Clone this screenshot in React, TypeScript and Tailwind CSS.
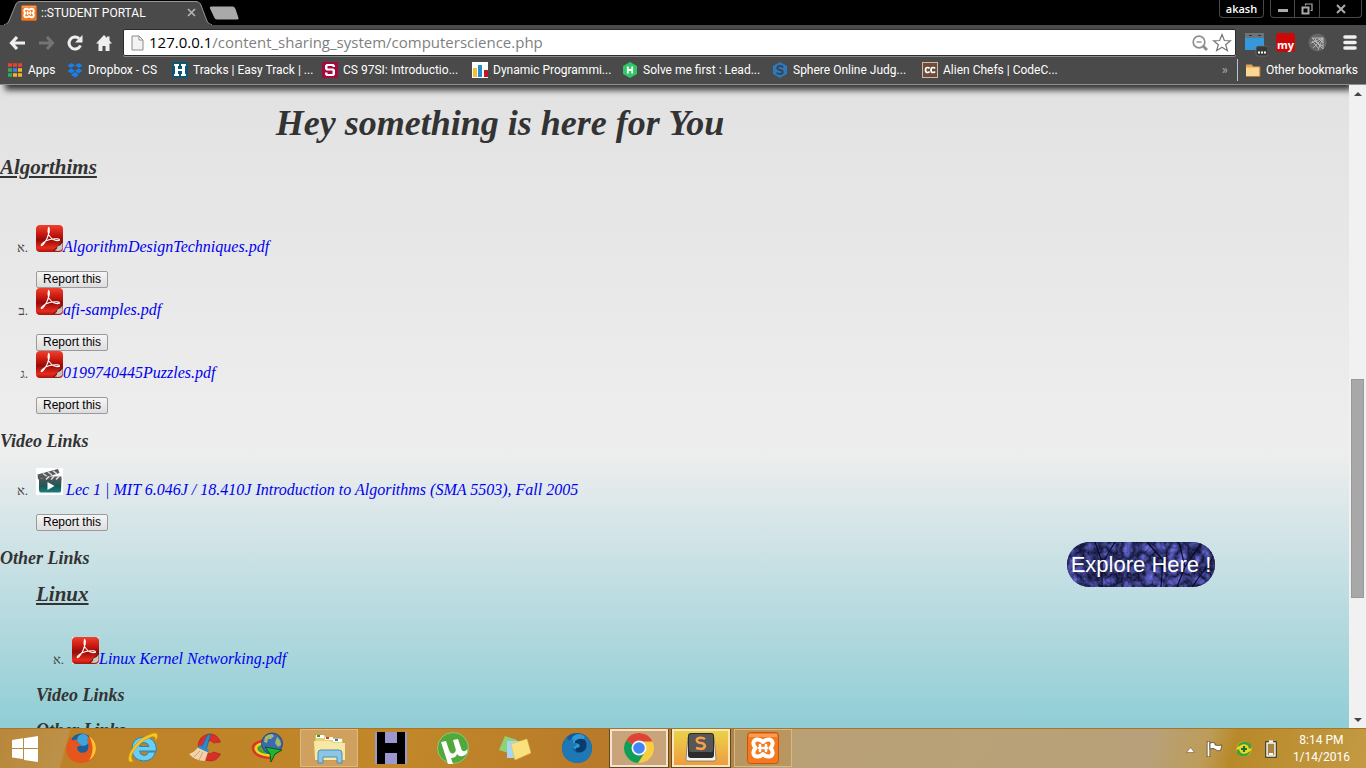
import type { ReactNode } from "react";

const ui = "font-['Open_Sans','Noto_Sans',sans-serif]";

function XamppIcon({ className }: { className: string }) {
  return (
    <svg viewBox="0 0 32 32" className={className} aria-hidden="true">
      <rect x="0.5" y="0.5" width="31" height="31" rx="3" fill="#f47a20" stroke="#c9540a" />
      <path d="M2 2h28v3H2z" fill="#fbb27c" opacity="0.6" />
      <path
        d="M16 10Q14 7.500 10.500 7.500C6 7.500 5 12.500 8.500 16C5 19.500 6 24.500 10.500 24.500Q14 24.500 16 22Q18 24.500 21.500 24.500C26 24.500 27 19.500 23.500 16C27 12.500 26 7.500 21.500 7.500Q18 7.500 16 10z"
        fill="none"
        stroke="#fff"
        strokeWidth="4"
        strokeLinejoin="round"
      />
      <path d="M12 16h8M13 13v6M19 13v6" fill="none" stroke="#fff" strokeWidth="2.600" strokeLinecap="round" />
    </svg>
  );
}

function PdfIcon() {
  return (
    <svg viewBox="0 0 27 27" className="h-[27px] w-[27px] shrink-0" aria-hidden="true">
      <defs>
        <linearGradient id="pdfRed" x1="0" y1="0" x2="0" y2="1">
          <stop offset="0" stopColor="#f2402c" />
          <stop offset="0.35" stopColor="#c4170f" />
          <stop offset="0.55" stopColor="#960a08" />
          <stop offset="0.85" stopColor="#e82c1c" />
          <stop offset="1" stopColor="#a5140f" />
        </linearGradient>
      </defs>
      <rect width="27" height="27" fill="#f6eeee" />
      <rect width="27" height="27" rx="4" fill="url(#pdfRed)" />
      <path d="M17 26L26.500 16v6L23 26z" fill="#5a1510" />
      <path d="M18.500 25.500Q21.500 24 21.500 21.500 25 20.500 26.500 17.500V23Q25.500 26 22 26z" fill="#c9c5bf" />
      <path
        d="M12.500 2.500c-1 4 .3 8.500 3.300 11.200c2.400 2 6.200 2.300 7.700 1.500c.7-1.300-3-1.800-7.200-1.200c-4.300.6-8 2.200-10.800 5.300c-.9 1.500.4 1.800 1.600.4c3-3.600 5-7.800 6-12.300c.4-2.600.2-4.700-.6-4.900z"
        fill="none"
        stroke="#fff"
        strokeWidth="1.1"
      />
    </svg>
  );
}

function VideoIcon() {
  return (
    <svg viewBox="0 0 27 27" className="mr-[3px] h-[27px] w-[27px] shrink-0" aria-hidden="true">
      <defs>
        <linearGradient id="clap" x1="0" y1="0" x2="0" y2="1">
          <stop offset="0" stopColor="#4b5558" />
          <stop offset="0.55" stopColor="#175a5a" />
          <stop offset="1" stopColor="#1b7f7a" />
        </linearGradient>
      </defs>
      <rect width="27" height="27" fill="#fff" />
      <path d="M3 11h22.500L25 23q0 1.500-2 1.500H5Q3 24.500 3 22z" fill="url(#clap)" />
      <path d="M1.500 6.500L22 1l1.500 4L6 10.500l-4 1z" fill="#55595c" />
      <path d="M7 5.500l4 3M12 4l4 3M17 2.800l4 3" stroke="#d8d8d8" strokeWidth="1.500" />
      <path d="M5 11.500h20.500v-3H8z" fill="#55595c" />
      <path d="M10 11.500l3-3M15 11.500l3-3M20 11.500l3-3" stroke="#e0e0e0" strokeWidth="1.500" />
      <path d="M11.500 14l7 4-7 4z" fill="#fff" />
    </svg>
  );
}

function FileItem({ marker, name, video, report = true }: { marker: string; name: string; video?: boolean; report?: boolean }) {
  return (
    <li className="flex items-baseline">
      <span className="w-9 shrink-0 pr-2 text-right text-[13px] leading-5 text-[#444]">{marker}</span>
      <div>
        <div className="flex h-8 items-baseline">
          {video ? <VideoIcon /> : <PdfIcon />}
          <a href="#file" className="text-[16px] leading-5 whitespace-nowrap text-[#0000ee] italic">
            {name}
          </a>
        </div>
        {report && (
          <button className="mt-[14px] block h-[17px] w-[72px] rounded-xs border border-[#9a9a9a] bg-linear-to-b from-[#f6f6f6] to-[#dddddd] font-['Liberation_Sans',sans-serif] text-[12px] leading-[15px] text-black">
            Report this
          </button>
        )}
      </div>
    </li>
  );
}

function SubHeading({ className, children }: { className: string; children: ReactNode }) {
  return <h3 className={`h-6 text-[18px] leading-[22px] font-bold italic ${className}`}>{children}</h3>;
}

const bookmarks: { label: string; icon: ReactNode }[] = [
  {
    label: "Dropbox - CS",
    icon: (
      <g fill="#1a7fe8">
        <path d="M4.500 1L8 3.500 4 6 .5 3.500zM11.500 1L8 3.500 12 6l3.500-2.500zM.5 9L4 6.200 8 8.800 4.500 11.500zM15.500 9L12 6.200 8 8.800l3.500 2.700zM8 9.800l3.500 2.700v.8L8 15.500l-3.500-2.200v-.8z" />
      </g>
    ),
  },
  {
    label: "Tracks | Easy Track | ...",
    icon: (
      <>
        <rect width="16" height="16" fill="#0f5673" />
        <path d="M2 2h5v2H6v3h4V4H9V2h5v2h-1v8h1v2H9v-2h1V9H6v3h1v2H2v-2h1V4H2z" fill="#fff" />
      </>
    ),
  },
  {
    label: "CS 97SI: Introductio...",
    icon: (
      <>
        <rect width="16" height="16" fill="#a6093d" />
        <path d="M13 5V3.500L11.500 2h-7L3 3.500V7l1.500 1.500h6V12h-5v-1.500H3v2L4.500 14h7l1.500-1.500V8l-1.500-1.500h-6V4h5v1z" fill="#fff" />
      </>
    ),
  },
  {
    label: "Dynamic Programmi...",
    icon: (
      <>
        <rect width="16" height="16" fill="#fff" />
        <rect x="1" y="6" width="4" height="9" fill="#f5bf3c" />
        <rect x="6" y="3" width="4" height="12" fill="#2290cf" />
        <rect x="12" y="8" width="4" height="7" fill="#c01822" />
      </>
    ),
  },
  {
    label: "Solve me first : Lead...",
    icon: (
      <>
        <path d="M8 0l7 4v8l-7 4-7-4V4z" fill="#2ec866" />
        <path d="M5.800 4.500v7M10.200 4.500v7M5.800 8h4.400" stroke="#fff" strokeWidth="1.800" />
      </>
    ),
  },
  {
    label: "Sphere Online Judg...",
    icon: (
      <>
        <path d="M8 0l7 4v8l-7 4-7-4V4z" fill="#2e78bd" />
        <path d="M11 5.500Q10.500 4 8 4T5.200 6Q5.200 7.500 8 8t2.800 2Q10.800 12 8 12t-3-1.700" fill="none" stroke="#35464f" strokeWidth="1.800" />
      </>
    ),
  },
  {
    label: "Alien Chefs | CodeC...",
    icon: (
      <>
        <rect x="0.5" y="0.5" width="15" height="15" fill="#6d4c3a" stroke="#cfb8a6" />
        <path d="M7.500 6.500Q7 5.500 5.500 5.500 3.500 5.500 3.500 8T5.500 10.500Q7 10.500 7.500 9.500M13 6.500Q12.500 5.500 11 5.500 9 5.500 9 8t2 2.500q1.500 0 2-1" fill="none" stroke="#fff" strokeWidth="1.700" />
      </>
    ),
  },
];

function TitleBar() {
  return (
    <div className="flex h-[25px] items-start bg-black">
      <div className="relative ml-1 flex h-[25px] w-[208px] shrink-0 items-center pr-3 pl-[17px]">
        <svg viewBox="0 0 208 25" preserveAspectRatio="none" className="absolute inset-0 h-full w-full" aria-hidden="true">
          <path d="M0 25Q4 24 5 21L12 4Q13 1.500 16 1.500H192Q195 1.500 196.500 4L203 21Q204 24 208 25z" fill="#4a4a4a" stroke="#969696" />
          <path d="M1 25H207" stroke="#4a4a4a" strokeWidth="2" />
        </svg>
        <XamppIcon className="relative h-4 w-4" />
        <span className="relative ml-1 flex-1 font-['Roboto',sans-serif] text-[12px] leading-4 whitespace-nowrap text-white">::STUDENT PORTAL</span>
        <button aria-label="Close tab" className="relative mr-[1px] flex h-4 w-4 items-center justify-center">
          <svg viewBox="0 0 9 9" className="h-[9px] w-[9px]">
            <path d="M1 1l7 7M8 1L1 8" stroke="#b5b5b5" strokeWidth="1.600" />
          </svg>
        </button>
      </div>
      <button aria-label="New tab" className="mt-[6px] -ml-[3px]">
        <svg viewBox="0 0 30 14" className="h-[14px] w-[30px]">
          <path d="M2.500.5H24Q25.500.5 26.500 3l3 9q.5 1.500-1.500 1.500H8Q6 13.500 5 11L.8 2Q.5.500 2.500.5z" fill="#a9a9a9" />
        </svg>
      </button>
      <div className="flex-1" />
      <button className="h-[18px] w-[45px] rounded-b-sm border border-t-0 border-[#484848] text-[11px] leading-4 font-semibold text-white">akash</button>
      <div className="mr-1 ml-[6px] flex h-[18px] rounded-b-sm border border-t-0 border-[#484848]">
        <button aria-label="Minimize" className="flex w-6 items-center justify-center border-r border-[#484848]">
          <svg viewBox="0 0 12 12" className="h-3 w-3"><path d="M1 7.500h10" stroke="#aaa" strokeWidth="3" /></svg>
        </button>
        <button aria-label="Restore" className="flex w-[25px] items-center justify-center border-r border-[#484848]">
          <svg viewBox="0 0 12 12" className="h-3 w-3" fill="none" stroke="#aaa">
            <path d="M4.500 2.500V1h6.500v6.500H9.500" strokeWidth="1.200" />
            <path d="M1.500 4.500h6v6h-6z" strokeWidth="2" />
          </svg>
        </button>
        <button aria-label="Close" className="flex w-[41px] items-center justify-center">
          <svg viewBox="0 0 10 10" className="h-[10px] w-[10px]"><path d="M1 1l8 8M9 1L1 9" stroke="#aaa" strokeWidth="2" /></svg>
        </button>
      </div>
    </div>
  );
}

function Toolbar() {
  return (
    <div className="flex h-8 items-center pt-[3px] pr-[9px] pl-2">
      <button aria-label="Back" className="w-[18px]">
        <svg viewBox="0 0 18 18" className="h-[18px] w-[18px]"><path d="M9 3L3.500 9 9 15M3.500 9H17" fill="none" stroke="#efefef" strokeWidth="3.200" /></svg>
      </button>
      <button aria-label="Forward" className="ml-3 w-[18px]">
        <svg viewBox="0 0 18 18" className="h-[18px] w-[18px]"><path d="M9 3l5.500 6L9 15M14.500 9H1" fill="none" stroke="#747474" strokeWidth="3" /></svg>
      </button>
      <button aria-label="Reload" className="ml-[10px] w-[18px]">
        <svg viewBox="0 0 18 18" className="h-[18px] w-[18px]">
          <path d="M14.500 11.500A6 6 0 1 1 13 4.500" fill="none" stroke="#efefef" strokeWidth="3" />
          <path d="M16.500 1v7.500H9z" fill="#efefef" />
        </svg>
      </button>
      <button aria-label="Home" className="ml-[11px] w-[18px]">
        <svg viewBox="0 0 18 18" className="h-[18px] w-[18px]"><path d="M9 1l3 3V2.500h2.500v4L17 9.500h-2.500V17h-4v-5h-3v5h-4V9.500H1z" fill="#efefef" /></svg>
      </button>
      <div className="ml-[10px] flex h-[27px] min-w-0 flex-1 items-center rounded-xs border border-[#2c2c2c] bg-white pr-[3px] pl-[7px] shadow-[0_1px_0_#8a8a8a]">
        <svg viewBox="0 0 13 16" className="h-4 w-[13px]"><path d="M1 1h7l4 4v10H1zM8 1v4h4" fill="#f3f3f3" stroke="#8c8c8c" /></svg>
        <p className="ml-[5px] min-w-0 flex-1 truncate pb-[2px] text-[15px] leading-[22px] text-[#7f7f7f]">
          <span className="text-black">127.0.0.1</span>/content_sharing_system/computerscience.php
        </p>
        <button aria-label="Zoom" className="mr-[3px]">
          <svg viewBox="0 0 18 18" className="h-[18px] w-[18px]" fill="none" stroke="#8e8e8e">
            <circle cx="8" cy="8" r="5.800" strokeWidth="1.700" /><path d="M5.500 8h5" strokeWidth="1.400" /><path d="M12 12l4 4" strokeWidth="2.800" />
          </svg>
        </button>
        <button aria-label="Bookmark this page">
          <svg viewBox="0 0 20 20" className="h-5 w-5"><path d="M10 1.500l2.400 6 6.100.3-4.800 3.900 1.700 6L10 14.300 4.600 17.700l1.700-6L1.500 7.800l6.100-.3z" fill="#fff" stroke="#757575" strokeWidth="1.200" /></svg>
        </button>
      </div>
      <button aria-label="Calendar extension" className="mt-1 ml-2">
        <svg viewBox="0 0 24 24" className="h-6 w-6">
          <rect x="1" y="0" width="19" height="5" fill="#69757b" /><path d="M5 2.500h3M14 2.500h3" stroke="#333" />
          <rect x="1" y="5" width="19" height="12" fill="#3498db" />
          <rect x="12" y="13" width="12" height="10" rx="2" fill="#383838" stroke="#777" strokeWidth="0.600" />
          <path d="M14 19.500h2m1 0h2m1 0h2" stroke="#fff" strokeWidth="2" />
        </svg>
      </button>
      <button aria-label="My extension" className="ml-2 flex h-[19px] w-[19px] items-center justify-center rounded-xs bg-[#cc0909] pt-1 text-[11px] leading-3 font-bold text-white">my</button>
      <button aria-label="Web extension" className="ml-[13px]">
        <svg viewBox="0 0 19 19" className="h-[19px] w-[19px]" fill="none" stroke="#bdbdbd">
          <circle cx="9.500" cy="9.500" r="9" fill="#666" stroke="none" />
          <path d="M4 5h11v11M4 5l11 11M15 5L5 15M15 5L3 10M15 5L10 17M7 5l1 3 4 4 3 1M11 5l1 2 1 1 2 1M4 8l3 3 3 4" strokeWidth="0.900" />
        </svg>
      </button>
      <button aria-label="Menu" className="ml-4">
        <svg viewBox="0 0 14 15" className="h-[15px] w-[14px]"><path d="M2 2h10M2 7.500h10M2 13h10" stroke="#f0f0f0" strokeWidth="3.600" strokeLinecap="round" /></svg>
      </button>
    </div>
  );
}

function BookmarkBar() {
  return (
    <div className="flex h-[28px] items-center border-b border-[#8f8f8f] pr-2 pb-px pl-2 font-['Roboto',sans-serif] text-[12px] leading-4 text-white">
      <a href="#apps" className="flex w-[59px] shrink-0 items-center gap-[6px]">
        <svg viewBox="0 0 14 14" className="h-[14px] w-[14px]">
          <path d="M0 2h4M5 2h4M10 2h4" stroke="#ee4136" strokeWidth="3.500" />
          <path d="M0 7h4" stroke="#2fae63" strokeWidth="3.500" /><path d="M5 7h4" stroke="#3c82f0" strokeWidth="3.500" /><path d="M10 7h4M5 12h4M10 12h4" stroke="#f6b81c" strokeWidth="3.500" />
          <path d="M0 12h4" stroke="#2fae63" strokeWidth="3.500" />
        </svg>
        Apps
      </a>
      <nav className="flex min-w-0 flex-1 overflow-hidden">
        {bookmarks.map((b, i) => (
          <a key={b.label} href="#bookmark" className={`flex shrink-0 items-center gap-[5px] whitespace-nowrap ${i === 0 ? "w-[105px]" : "w-[150px]"}`}>
            <svg viewBox="0 0 16 16" className="h-4 w-4 shrink-0" aria-hidden="true">{b.icon}</svg>
            {b.label}
          </a>
        ))}
      </nav>
      <button aria-label="More bookmarks" className="mr-[9px] text-[13px] text-[#aaa]">»</button>
      <div className="mr-[7px] h-[22px] w-px bg-[#b9c4d0]" />
      <a href="#other" className="flex items-center gap-[5px] whitespace-nowrap">
        <svg viewBox="0 0 16 16" className="h-4 w-4">
          <path d="M1 2.500h6l1 2h7v10H1z" fill="#e0a654" /><path d="M1 5.500h13.500v8.500H1z" fill="#fbd796" /><path d="M15 5v9.500H2" fill="none" stroke="#b17a33" />
        </svg>
        Other bookmarks
      </a>
    </div>
  );
}

const taskIcons: { label: string; box?: string; icon: ReactNode }[] = [
  {
    label: "Firefox",
    icon: (
      <>
        <circle cx="16.500" cy="14" r="12.500" fill="#1a5f9e" />
        <circle cx="18" cy="8" r="6" fill="#3ea4dc" />
        <path d="M3 10Q4 6 6 4.500 6 7 8 8.500 10.500 7 13 7.500 11.500 9 12 11 14.500 11 16 12 15 14.500 12 15 12 19 15.500 20.500 20 21.500 22.500 18.500 24.500 13 22 8L24 4Q31 9 31 17 30 30.500 16 31 2 30 1 17 1 13 3 10z" fill="#e4561b" />
        <path d="M24 4Q31 9 31 17 30 25 24 28.500 29 20 27 12 26 7 24 4z" fill="#fbc42c" />
      </>
    ),
  },
  {
    label: "Internet Explorer",
    icon: (
      <>
        <path d="M28.500 20Q26 29 16.500 29 5 28 5 17T16.500 5Q29.500 5 29.500 19H12.500Q13 23 17 23.500 20.500 23.500 21.500 20zM12.500 14.500H22Q21 10.500 17 10.500T12.500 14.500z" fill="#6ccdf5" stroke="#1f88bd" />
        <path d="M7 29Q1 32 1.500 26 2 20 9 12T24 2Q31-1 30.500 5 30 7 28.500 9 29 3 24 5 17 7 10 15T5 27Q5 29 7 29z" fill="#f9c820" stroke="#d49406" strokeWidth="0.600" />
      </>
    ),
  },
  {
    label: "CCleaner",
    icon: (
      <>
        <path d="M31.500 10Q28 1 19.500 2 9 4 9 16q1 13 13 13 6 0 9.500-7l-7-2q-3 3-6 1-3-6 0-11 3-3 6 1z" fill="#d83028" stroke="#a81d1c" strokeWidth="0.600" />
        <path d="M19 2l2.500 1L17 18l-5-2z" fill="#2b8acb" stroke="#1a5c93" strokeWidth="0.600" />
        <path d="M9 15l10 5-3 9Q6 29 0 22q6-2 9-7z" fill="#f2d2aa" />
        <path d="M11 19l-6 6m9-5l-4 8" stroke="#d0a26f" />
        <path d="M9.500 14.500l10 4.500" stroke="#2b8acb" strokeWidth="3" />
      </>
    ),
  },
  {
    label: "Internet Download Manager",
    icon: (
      <>
        <path d="M12 9Q1 11 2 17q2 8 17 9" fill="none" stroke="#df3328" strokeWidth="2.500" />
        <path d="M12 11.500Q4 13 5 17.500q2 5 14 6" fill="none" stroke="#f3d321" strokeWidth="2.500" />
        <path d="M12 14Q7 15 8 17.500q2 3 11 3.500" fill="none" stroke="#2bae3b" strokeWidth="2.500" />
        <circle cx="21" cy="11.500" r="10.500" fill="#3c69b4" stroke="#27477f" />
        <path d="M14 5q3-3 7-3l2 2-3 3-3 0-1 4-3-1zM26 5q4 3 4 8l-3 2-3-4z" fill="#a3b865" />
        <path d="M14 15l17 3-7 4-4 8-1-8z" fill="#1fb532" stroke="#075c13" />
      </>
    ),
  },
  {
    label: "File Explorer",
    box: "border border-[#d9b98a] bg-[#cfa05e]",
    icon: (
      <>
        <path d="M2 3h10l2 3h16v22H2z" fill="#e9cf76" stroke="#b99a3e" strokeWidth="0.600" />
        <path d="M3 3h8v3H3zM12 5h8v3h-8zM20 7h9v3h-9z" fill="#fff" />
        <path d="M4 3h3v2H4z" fill="#239c3f" /><path d="M13 5h3v2h-3z" fill="#cc3b25" /><path d="M22 7h3v2h-3z" fill="#2878d4" />
        <path d="M1 9h16l3 2h12v17H2z" fill="#f8e8a6" />
        <path d="M5 31V21q0-3 3-3h18q3 0 3 3v10h-5v-6H10v6z" fill="#8cc6e7" stroke="#4b8db8" />
      </>
    ),
  },
  {
    label: "H",
    icon: (
      <>
        <rect width="32" height="32" fill="#9a98ce" /><path d="M2 0h8v11h12V0h8v32h-8V21H10v11H2z" fill="#000" />
      </>
    ),
  },
  {
    label: "uTorrent",
    icon: (
      <>
        <circle cx="16" cy="16" r="15.500" fill="#52a83a" stroke="#90c777" />
        <path d="M4 10l5-1 3 9q2 5 5 3 3-2 1-6l-2-7 5-1 3 9q1 4 4 3 3-1 2-4 2 7-4 9-4 1-6-2-1 4-6 4l2 6h-5z" fill="#fff" />
      </>
    ),
  },
  {
    label: "Sticky Notes",
    icon: (
      <>
        <path d="M6 4l12 4-5 14L0 18z" fill="#8ed277" /><path d="M8 9l14 0v17H8z" fill="#a6d5f7" /><path d="M12 12l16-5 4 14-16 7z" fill="#f9e27d" stroke="#e0bd45" strokeWidth="0.500" />
      </>
    ),
  },
  {
    label: "Firefox Developer",
    icon: (
      <>
        <circle cx="16" cy="16" r="15" fill="#145a96" />
        <circle cx="18" cy="10" r="8" fill="#2f9bd6" />
        <path d="M3 10Q4 6 6 4.500 6 7 8 8.500 10.500 7 13 7.500 11.500 9 12 11 14.500 11 16 12 15 14.500 12 15 12 19 15.500 20.500 20 21.500 22.500 18.500 24.500 13 22 8L24 4Q31 9 31 17 30 30.500 16 31 2 30 1 17 1 13 3 10z" fill="#1f78b6" />
        <path d="M14 9q5-4 10-1 3 5 0 10-3 3-7 2-3-1-2-4 3 0 4-2-1-3-5-3z" fill="#0b3a6b" />
      </>
    ),
  },
  {
    label: "Chrome",
    box: "border-2 border-[#f1e3d0] bg-[#c9a47a] outline outline-[#64491f]",
    icon: (
      <>
        <circle cx="16" cy="16" r="15" fill="#f9cd42" />
        <path d="M16 16L3 8.500A15 15 0 0 1 29.500 9.500H16z" fill="#db4437" />
        <path d="M16 16L3 8.500A15 15 0 0 0 15 31l7-11z" fill="#0f9d58" />
        <circle cx="16" cy="16" r="7.500" fill="#f5f5f5" /><circle cx="16" cy="16" r="5.800" fill="#4285f4" />
      </>
    ),
  },
  {
    label: "Sublime Text",
    box: "border-2 border-[#f7e7ba] bg-linear-to-b from-[#e9d247] to-[#ee9d42] outline outline-[#64491f]",
    icon: (
      <>
        <path d="M3 5h26l2 22q0 2-2 2H3q-2 0-2-2z" fill="#f4f2ed" stroke="#666" strokeWidth="0.700" />
        <rect x="3" y="1" width="26" height="25" rx="3" fill="#2c2c2c" /><rect x="4" y="2" width="24" height="18" rx="2" fill="#575757" />
        <path d="M20 7q-3-2-6-1t-2 3q1 2 4 2t4 3q-1 3-4 3l-5-1" fill="none" stroke="#f6a04a" strokeWidth="2.500" />
      </>
    ),
  },
];

function Taskbar() {
  return (
    <footer className="flex h-10 shrink-0 items-stretch overflow-hidden border-t border-[#a97424] bg-[linear-gradient(105deg,#b8873b_0,#bd9148_5%,#bd8228_5.200%,#c18729_30%,#b5752a_50%,#b18547_54%,#b9a075_57%,#b8a17a_84%,#bd9c57_88%,#b88928_90%,#c39a43_100%)]">
      <button aria-label="Start" className="flex w-[50px] shrink-0 items-center justify-center">
        <svg viewBox="0 0 28 26" className="h-[26px] w-7" fill="#fff">
          <path d="M1 4l11-1.700V12H1zM13 2.200L27 0v12H13zM1 13h11v10L1 21.400zM13 13h14v13l-14-2z" />
        </svg>
      </button>
      <div className="ml-[2px] flex gap-1 pb-px">
        {taskIcons.map((t) => (
          <button key={t.label} aria-label={t.label} className={`flex w-[58px] items-center justify-center ${t.box ?? ""}`}>
            <svg viewBox="0 0 32 32" className="h-8 w-8">{t.icon}</svg>
          </button>
        ))}
        <button aria-label="XAMPP" className="flex w-[58px] items-center justify-center border border-[#d3b98f] bg-[#b99660]">
          <XamppIcon className="h-8 w-8" />
        </button>
      </div>
      <div className="flex-1" />
      <div className="flex items-center">
        <svg viewBox="0 0 9 6" className="mt-[3px] h-[6px] w-[9px]"><path d="M4.500.5L8.500 5.500h-8z" fill="#fff" stroke="#5d4520" strokeWidth="0.500" /></svg>
        <svg viewBox="0 0 18 18" className="ml-[11px] h-[18px] w-[18px]"><path d="M2.500 1v16" stroke="#493a20" strokeWidth="3.400" /><path d="M2.500 1.500v15" stroke="#fff" strokeWidth="2" /><path d="M4 3q3-1 5 0v2q3 1 7 0l-1.500 5.500q-3 1-5-1-2-2-5.500-.5z" fill="#fff" stroke="#493a20" strokeWidth="0.700" /></svg>
        <svg viewBox="0 0 18 18" className="ml-[11px] h-[18px] w-[18px]">
          <circle cx="9" cy="9" r="7.500" fill="#f4d51f" />
          <path d="M2 7.500Q4 1.500 9.500 1.500 13 1.500 15 4l1-1v5.500h-5.500l2-2Q8 2.500 2 7.500zM16 10.500Q14 16.500 8.500 16.500 5 16.500 3 14l-1 1V9.500h5.500l-2 2Q10 15.500 16 10.500z" fill="#3da143" />
          <circle cx="9" cy="9" r="4.800" fill="#f4d51f" />
          <path d="M9 6v6M6 9h6" stroke="#18742b" strokeWidth="2.200" />
        </svg>
        <svg viewBox="0 0 12 18" className="ml-[12px] h-[18px] w-3"><rect x="1.500" y="2.500" width="9" height="14" fill="none" stroke="#333" strokeWidth="2.600" /><path d="M4 1.500h4" stroke="#fff" strokeWidth="2" /><rect x="2" y="3" width="8" height="13" fill="#a98340" stroke="#fff" strokeWidth="1.400" /><path d="M4 14h4" stroke="#fff" strokeWidth="2" /></svg>
      </div>
      <div className="mr-4 ml-4 flex flex-col justify-center text-center font-['Roboto',sans-serif] text-[12px] leading-[17px] text-white">
        <span>8:14 PM</span>
        <span>1/14/2016</span>
      </div>
    </footer>
  );
}

function Scrollbar() {
  return (
    <div className="flex w-[17px] shrink-0 flex-col bg-[#f1f1f1] px-[2px]">
      <div className="flex h-[17px] items-center justify-center"><svg viewBox="0 0 8 4" className="h-1 w-2"><path d="M0 4l4-4 4 4z" fill="#444" /></svg></div>
      <div className="grow-278" />
      <div className="grow-218 border border-[#999] bg-[#a8a8a8]" />
      <div className="grow-113" />
      <div className="flex h-[17px] items-center justify-center"><svg viewBox="0 0 8 4" className="h-1 w-2"><path d="M0 0l4 4 4-4z" fill="#444" /></svg></div>
    </div>
  );
}

export default function App() {
  return (
    <div className={`flex h-screen flex-col overflow-hidden ${ui}`}>
      <header className="shrink-0 bg-[#4a4a4a]">
        <TitleBar />
        <Toolbar />
        <BookmarkBar />
      </header>
      <div className="relative flex min-h-0 flex-1">
        <main className="min-w-0 flex-1 overflow-hidden bg-[linear-gradient(#e2e2e2_0,#eeeeee_57%,#d2e4e7_70%,#90cdd5_100%)] font-['Liberation_Serif',serif] text-[#333]">
          <div className="-mt-2 ml-2 h-2 shadow-[0_2px_6px_3px_#333]" />
          <h1 className="max-w-[1000px] pt-5 text-center text-[36px] leading-9 font-bold italic">Hey something is here for You</h1>
          <h2 className="mt-3 h-7 text-[21px] leading-7 font-bold italic underline">Algorthims</h2>
          <ol className="mt-[44px]">
            <FileItem marker="א." name="AlgorithmDesignTechniques.pdf" />
            <FileItem marker="ב." name="afi-samples.pdf" />
            <FileItem marker="ג." name="0199740445Puzzles.pdf" />
          </ol>
          <SubHeading className="mt-4">Video Links</SubHeading>
          <ol className="mt-[14px]">
            <FileItem marker="א." video name="Lec 1 | MIT 6.046J / 18.410J Introduction to Algorithms (SMA 5503), Fall 2005" />
          </ol>
          <SubHeading className="mt-4">Other Links</SubHeading>
          <section className="pl-9">
            <h2 className="mt-[9px] h-7 text-[21px] leading-7 font-bold italic underline">Linux</h2>
            <ol className="mt-[29px]">
              <FileItem marker="א." name="Linux Kernel Networking.pdf" report={false} />
            </ol>
            <SubHeading className="mt-[14px]">Video Links</SubHeading>
            <SubHeading className="mt-[11px]">Other Links</SubHeading>
          </section>
        </main>
        <Scrollbar />
        <button className="absolute right-[151px] bottom-[141px] h-[45px] w-[148px] overflow-hidden rounded-full bg-[#20225e] font-['Liberation_Sans',sans-serif] text-[22px] text-white">
          <svg viewBox="0 0 148 45" className="absolute inset-0 h-full w-full" aria-hidden="true">
            <filter id="foliage" x="0" y="0" width="1" height="1" colorInterpolationFilters="sRGB">
              <feTurbulence type="turbulence" baseFrequency="0.090" numOctaves="4" seed="7" />
              <feColorMatrix values="0.55 0 0 0 0.03  0.55 0 0 0 0.04  1.05 0 0 0 0.13  0 0 0 0 1" />
            </filter>
            <rect width="148" height="45" filter="url(#foliage)" />
            <path d="M35 45V20L28 0M35 22L48 0M110 45l8-20-6-25M118 25l17-25M80 0l16 18-2 27M125 45l20-28" fill="none" stroke="#080a25" strokeWidth="1.200" />
          </svg>
          <span className="relative whitespace-nowrap">Explore Here !</span>
        </button>
      </div>
      <Taskbar />
    </div>
  );
}
